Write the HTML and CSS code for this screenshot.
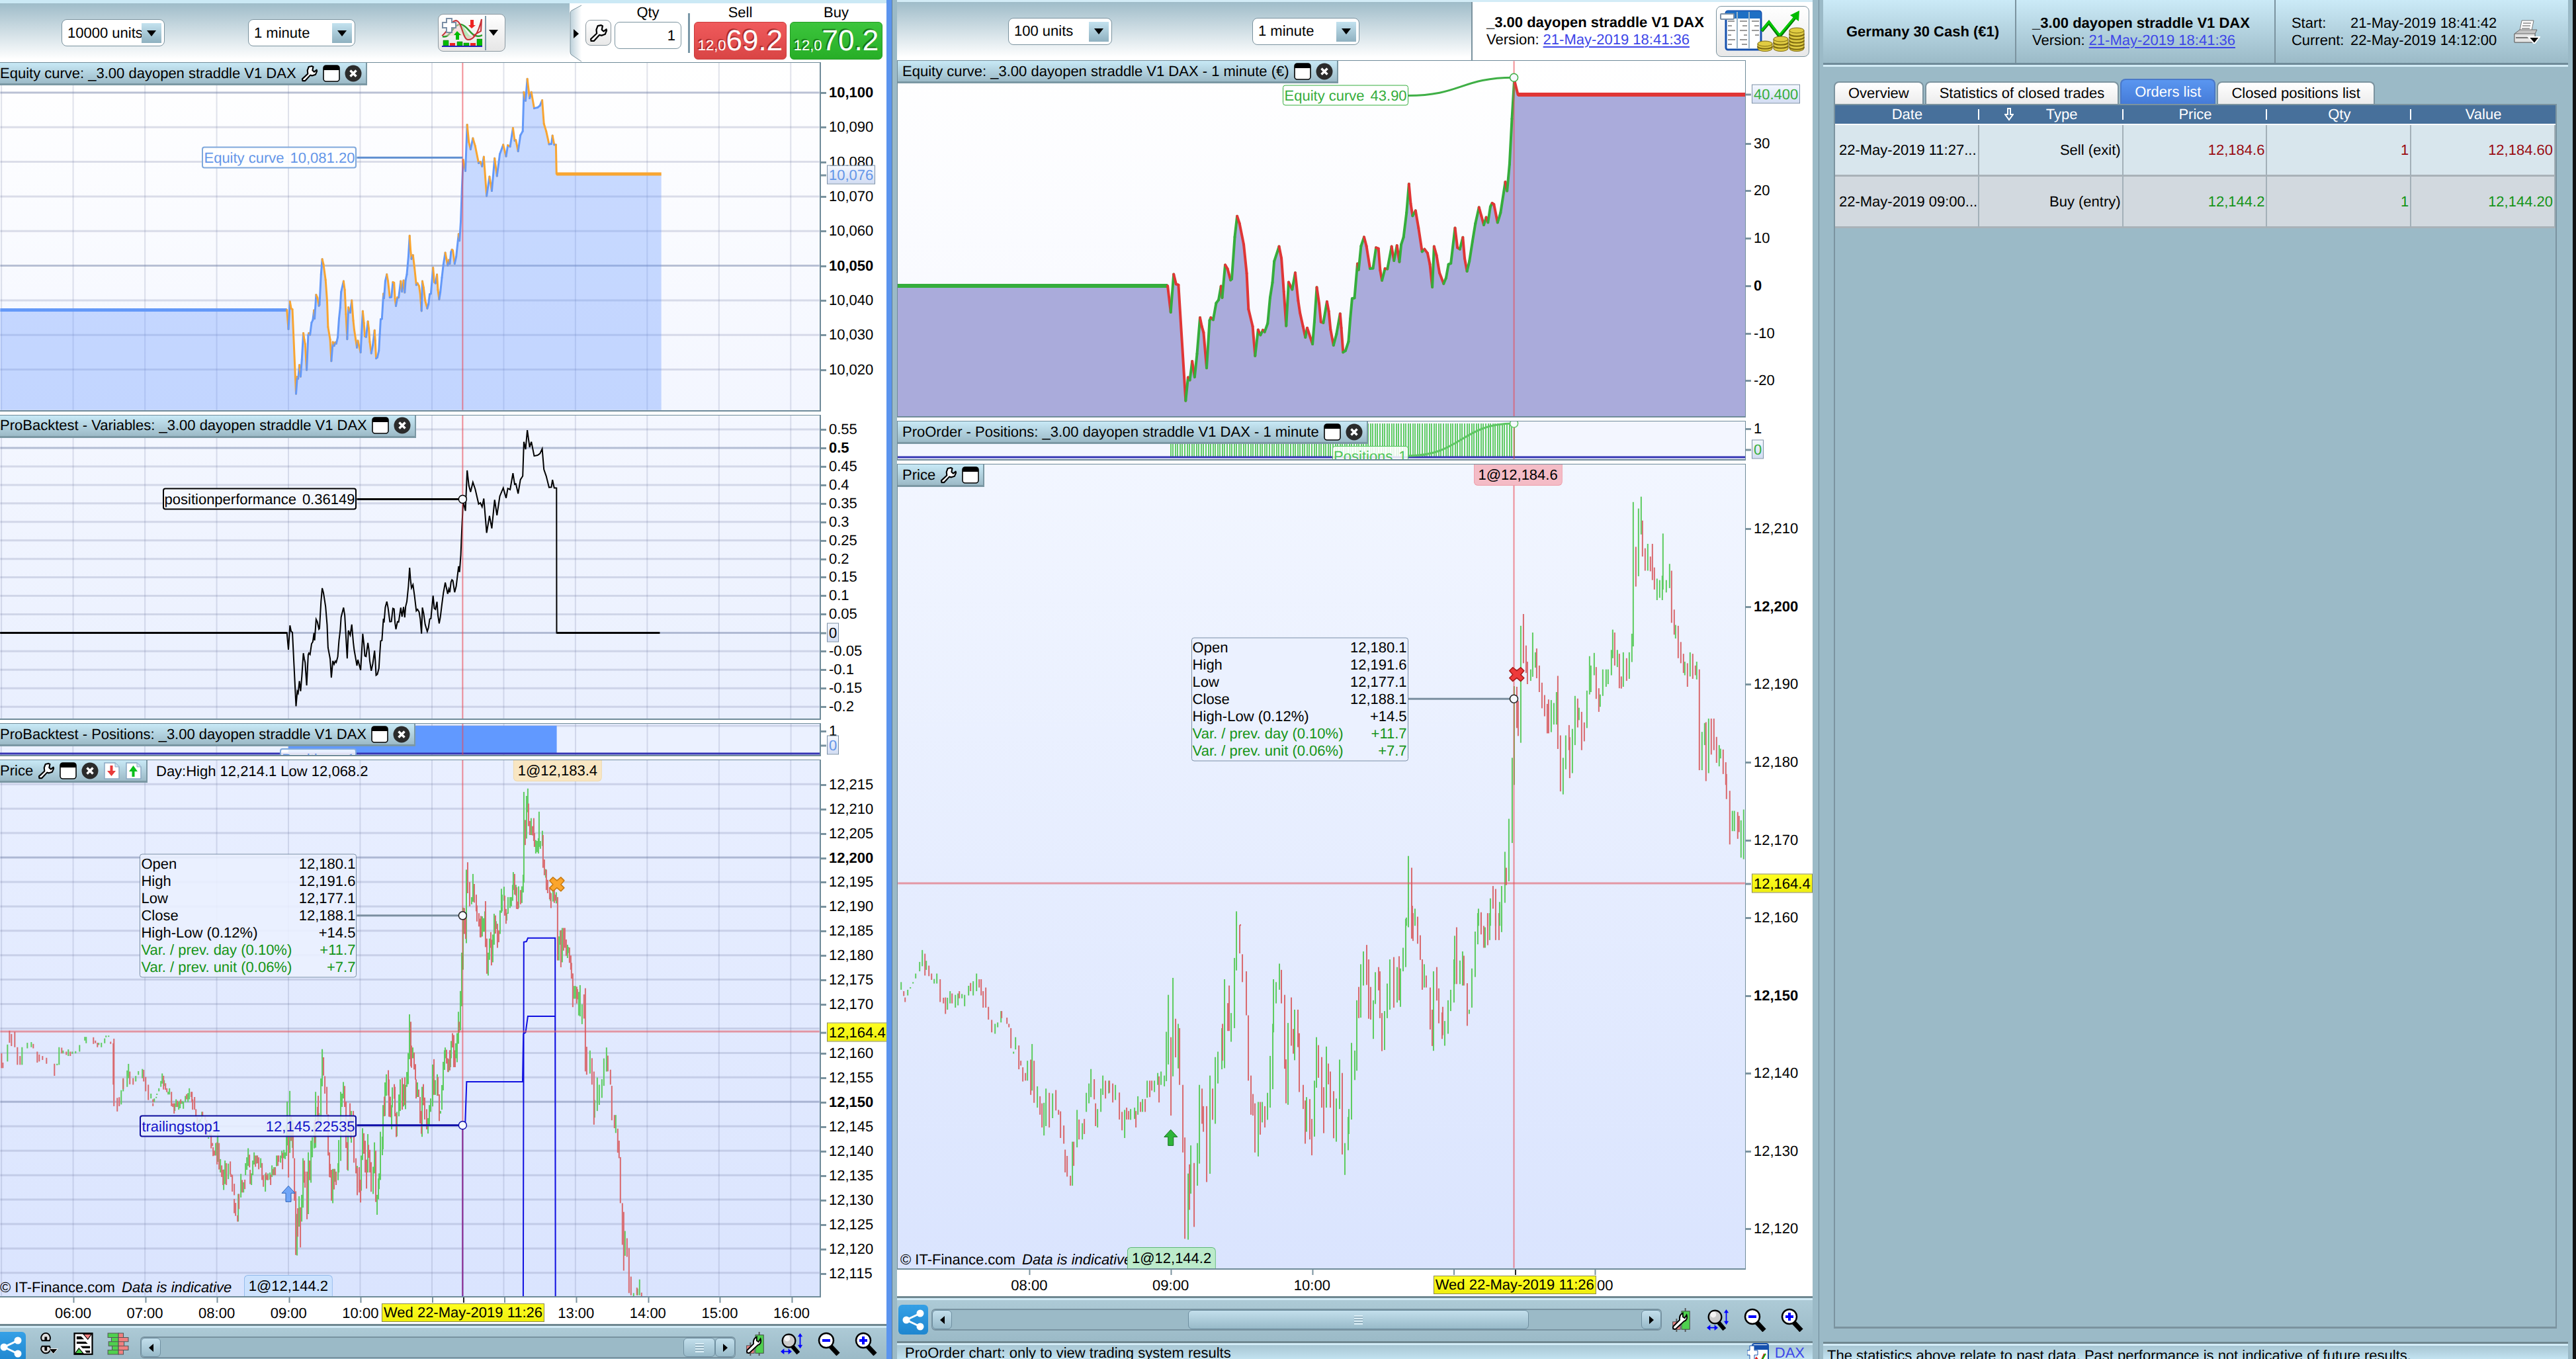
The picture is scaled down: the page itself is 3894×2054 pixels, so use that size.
FILE: index.html
```html
<!DOCTYPE html>
<html lang="en">
<head>
<meta charset="utf-8">
<title>_3.00 dayopen straddle V1 DAX</title>
<link rel="stylesheet" href="styles.css">
</head>
<body>
<svg class="sprite" aria-hidden="true">
  <symbol id="wrench" viewBox="-1 -1 27 27"><path d="M11.2 2.1 15.8 1l2.4 1.1L17 7.6l2.7 2.4 3.9-3 .4 2-2.2 5.2-5.1 1.8-3.1-.8L5.500 24l-4 0L1 21.200 9.700 13l-.6-5.400z" fill="#fff" stroke="#000" stroke-width="2.200" stroke-linejoin="round"/></symbol>
  <symbol id="win" viewBox="0 0 26 26"><rect x="1" y="1" width="24" height="24" rx="4" fill="#fff" stroke="#000" stroke-width="1.600"/><path d="M1 8V5q0-4 4-4h16q4 0 4 4v3z"/></symbol>
  <symbol id="close" viewBox="0 0 26 26"><circle cx="13" cy="13" r="12.500" fill="#2b2b2b"/><path d="M8.500 8.500l9 9m0-9l-9 9" stroke="#fff" stroke-width="3.500"/></symbol>
  <symbol id="docdown" viewBox="0 0 26 26"><path d="M2 1h16l6 6v18H2z" fill="#fff" stroke="#8aa9c4" stroke-width="1.500"/><path d="M18 1v6h6" fill="#cfe2f2" stroke="#8aa9c4"/><path d="M10.500 5h4v8h4.500l-6.500 8L6 13h4.500z" fill="#e83a3a"/></symbol>
  <symbol id="docup" viewBox="0 0 26 26"><path d="M2 1h16l6 6v18H2z" fill="#fff" stroke="#8aa9c4" stroke-width="1.500"/><path d="M18 1v6h6" fill="#cfe2f2" stroke="#8aa9c4"/><path d="M10.500 22h4v-8H19l-6.500-9L6 14h4.500z" fill="#0bbf1b"/></symbol>
  <symbol id="tri" viewBox="0 0 14 9"><path d="M0 0h14L7 9z"/></symbol>
  <symbol id="triright" viewBox="0 0 8 14"><path d="M0 0v14l8-7z"/></symbol>
  <symbol id="trileft" viewBox="0 0 8 14"><path d="M8 0v14L0 7z"/></symbol>
  <symbol id="share" viewBox="0 0 45 45"><path d="M33 13 12 23l21 10" fill="none" stroke="#fff" stroke-width="3"/><circle cx="33" cy="13" r="5.500" fill="#fff"/><circle cx="12" cy="23" r="5.500" fill="#fff"/><circle cx="33" cy="33" r="5.500" fill="#fff"/></symbol>
  <symbol id="candles" viewBox="0 0 32 38"><path d="M9 17v21M23 0v38" stroke="#555" stroke-width="2"/><rect x="3" y="22" width="12" height="12" fill="#f08585" stroke="#444"/><rect x="17" y="5" width="13" height="29" fill="#4fd04f" stroke="#444"/><path d="M19 8v6l3 2 3-5c2 6-1 9-4 10L8 33c-3 2-6-1-4-4l10-10c-1-6 1-9 5-11z" fill="#fff" stroke="#000" stroke-width="2"/></symbol>
  <symbol id="zoomfit" viewBox="0 0 38 36"><path d="M18 20l12 14" stroke="#000" stroke-width="7"/><circle cx="14" cy="13" r="11" fill="#ccc" stroke="#000" stroke-width="2.500"/><circle cx="11" cy="9" r="5" fill="#f4f4f4"/><path d="M33 4v18M3 31h12" stroke="#00f" stroke-width="2"/><path d="M33 0l-4 6h8zM33 26l-4-6h8zM0 31l6-5v10zM19 31l-6-5v10z" fill="#00f"/></symbol>
  <symbol id="zoomout" viewBox="0 0 34 36"><path d="M18 20l13 14" stroke="#000" stroke-width="7"/><circle cx="13" cy="13" r="11" fill="#fff" stroke="#000" stroke-width="2.500"/><path d="M7 13h12" stroke="#00f" stroke-width="4"/></symbol>
  <symbol id="zoomin" viewBox="0 0 34 36"><path d="M18 20l13 14" stroke="#000" stroke-width="7"/><circle cx="13" cy="13" r="11" fill="#fff" stroke="#000" stroke-width="2.500"/><path d="M7 13h12M13 7v12" stroke="#00f" stroke-width="4"/></symbol>
</svg>
<main class="desk">
  <section class="window backtest">
    <header class="toolbar">
      <label class="picker units"><select aria-label="Units"><option>10000 units</option></select><span class="drop"><svg><use href="#tri"/></svg></span></label>
      <label class="picker minutes"><select aria-label="Timeframe"><option>1 minute</option></select><span class="drop"><svg><use href="#tri"/></svg></span></label>
      <button class="indicator" aria-label="Add indicator">
        <svg class="art" viewBox="0 0 62 46"><path d="M2 28C14 32 18 8 30 10S46 34 62 26" fill="none" stroke="#2d9b2d" stroke-width="2.500"/><path d="M26 11C34 6 40 30 46 27 38 42 32 22 26 11z" fill="#b6e6b6"/><path d="M1 27C10 22 14 4 22 4 32 5 32 32 40 33S56 24 61 2L60 20 48 27" fill="#f6c9c9" fill-opacity=".5" stroke="#c62f35" stroke-width="2"/><path d="M8 1h8v6h6v8h-6v7H8v-7H2V7h6z" fill="#fff" stroke="#7b8fa6" stroke-width="2"/><path d="M24 20l-5 6h3v7h5v-7h3z" fill="#0b0"/><path d="M46 16l-5-5h3V3h5v8h3z" fill="#e22"/><path d="M3 34h8v8H3zM24 36h8v6h-8zM34 38h8v4h-8zM54 32h8v10h-8z" fill="#0b0" stroke="#060" stroke-width=".5"/><path d="M13 38h8v4h-8zM44 38h8v4h-8z" fill="#e22"/><path d="M1 43h61" stroke="#22b" stroke-width="2"/></svg>
        <span class="rule"></span><svg class="tri"><use href="#tri"/></svg>
      </button>
      <div class="trade">
        <svg class="notch" viewBox="0 0 18 88" preserveAspectRatio="none"><defs><linearGradient id="ng"><stop offset="0" stop-color="#bcd0da"/><stop offset="1" stop-color="#fff"/></linearGradient></defs><path d="M18 2 3 10Q1 11 1 14V72Q1 76 3 77L18 87z" fill="url(#ng)"/><path d="M18 2 3 10Q1 11 1 14V72Q1 76 3 77L18 87" fill="none" stroke="#7b939f"/><path d="M6 38l8 7-8 7z"/></svg>
        <button class="tool" aria-label="Order settings"><svg><use href="#wrench"/></svg></button>
        <label class="col qty"><span>Qty</span><input value="1"></label>
        <span class="vrule"></span>
        <div class="col"><span>Sell</span><button class="deal sell"><small>12,0</small><b>69.2</b></button></div>
        <div class="col"><span>Buy</span><button class="deal buy"><small>12,0</small><b>70.2</b></button></div>
      </div>
    </header>
    <div class="charts">
      <div class="panel p-equity" data-chart="leftEquity"><div class="plot">
        <div class="title"><span>Equity curve: _3.00 dayopen straddle V1 DAX</span><svg><use href="#wrench"/></svg><svg><use href="#win"/></svg><svg><use href="#close"/></svg></div>
        <div class="callout blue" data-y="10081.2"><span>Equity curve</span><span>10,081.20</span></div></div><div class="axis"></div></div>
      <div class="panel p-vars" data-chart="leftVars"><div class="plot">
        <div class="title"><span>ProBacktest - Variables: _3.00 dayopen straddle V1 DAX</span><svg><use href="#win"/></svg><svg><use href="#close"/></svg></div>
        <div class="callout black" data-y="0.3615"><span>positionperformance</span><span>0.36149</span></div></div><div class="axis"></div></div>
      <div class="panel p-pos" data-chart="leftPos"><div class="plot">
        <div class="callout blue low"><span>Positions</span><span>1</span></div>
        <div class="title"><span>ProBacktest - Positions: _3.00 dayopen straddle V1 DAX</span><svg><use href="#win"/></svg><svg><use href="#close"/></svg></div></div><div class="axis"></div></div>
      <div class="panel p-price" data-chart="leftPrice"><div class="plot">
        <div class="title"><span>Price</span><svg><use href="#wrench"/></svg><svg><use href="#win"/></svg><svg><use href="#close"/></svg><svg><use href="#docdown"/></svg><svg><use href="#docup"/></svg></div>
        <div class="range">Day:High 12,214.1 Low 12,068.2</div>
        <div class="order top amber" data-x="225">1@12,183.4</div>
        <div class="order bottom azure" data-x="0">1@12,144.2</div>
        <table class="callout ohlc" data-y="12188.1"><tr><th>Open</th><td>12,180.1</td></tr><tr><th>High</th><td>12,191.6</td></tr><tr><th>Low</th><td>12,177.1</td></tr><tr><th>Close</th><td>12,188.1</td></tr><tr><th>High-Low (0.12%)</th><td>+14.5</td></tr><tr class="up"><th>Var. / prev. day (0.10%)</th><td>+11.7</td></tr><tr class="up"><th>Var. / prev. unit (0.06%)</th><td>+7.7</td></tr></table>
        <div class="callout navy wide" data-y="12145.2"><span>trailingstop1</span><span>12,145.22535</span></div>
        <p class="credit">© IT-Finance.com <i>Data is indicative</i></p></div><div class="axis"></div></div>
      <div class="time" data-chart="leftPrice"><div class="hours"></div></div>
    </div>
    <footer class="tools">
      <button class="share" aria-label="Share"><svg><use href="#share"/></svg></button>
      <button class="icon side" aria-label="Link windows"><svg viewBox="0 0 30 38"><path d="M4 14C0 8 5 2 10 2s9 6 6 12h-5V9H9v5zM4 23c-4 5 1 11 6 11s9-5 6-11h-5v6H9v-6z" fill="#ddd" stroke="#000" stroke-width="2"/><path d="M15 27h14l-7 8z" stroke="#fff"/></svg></button>
      <button class="icon side" aria-label="Orders"><svg viewBox="0 0 26 32"><rect x="1" y="2" width="24" height="28" fill="#fff" stroke="#000" stroke-width="2"/><path d="M13 3h11l-5 7z" fill="#f08080" stroke="#000"/><path d="M2 29l5-7 6 7z" fill="#4c4" stroke="#000"/><path d="M4 6h6l4 4H4zM4 13h12l3 3H4zM9 19h13v3H12zM15 25h7v3h-5z"/></svg></button>
      <button class="icon side last" aria-label="Order book"><svg viewBox="0 0 32 32"><g stroke="#555"><path d="M2 1h15v6H2zM7 7h10v6H7zM3 13h14v6H3zM8 19h9v6H8zM2 25h15v6H2z" fill="#4fd04f"/><path d="M17 1h7v6h-7zM17 7h14v6H17zM17 13h8v6h-8zM17 19h14v6H17zM17 25h7v6h-7z" fill="#f08080"/></g></svg></button>
      <div class="scroll"><button aria-label="Back"><svg><use href="#trileft"/></svg></button><span class="track"></span><span class="thumb"><i></i></span><button aria-label="Forward"><svg><use href="#triright"/></svg></button></div>
      <button class="icon" aria-label="Chart settings"><svg><use href="#candles"/></svg></button><button class="icon" aria-label="Fit"><svg><use href="#zoomfit"/></svg></button><button class="icon" aria-label="Zoom out"><svg><use href="#zoomout"/></svg></button><button class="icon" aria-label="Zoom in"><svg><use href="#zoomin"/></svg></button>
    </footer>
  </section>

  <div class="divider"></div>

  <section class="window live">
    <header class="toolbar">
      <label class="picker hundred"><select aria-label="Units"><option>100 units</option></select><span class="drop"><svg><use href="#tri"/></svg></span></label>
      <label class="picker minutes"><select aria-label="Timeframe"><option>1 minute</option></select><span class="drop"><svg><use href="#tri"/></svg></span></label>
      <div class="system"><div><strong>_3.00 dayopen straddle V1 DAX</strong><br>Version: <a href="#v">21-May-2019 18:41:36</a></div>
        <button class="report" aria-label="Detailed report"><svg viewBox="0 0 130 66"><rect x="9" y="3" width="53" height="58" rx="3" fill="#fff" stroke="#1550ad" stroke-width="3"/><path d="M9 14V6q0-3 3-3h47q3 0 3 3v8z" fill="#1e6fc4"/><path d="M26 4v56M44 4v56" stroke="#9bb4c6" stroke-width="2"/><path d="M12 18h10M12 25h6M12 32h11M12 39h5M12 46h11M12 53h6M30 18h11M34 25h7M30 32h11M36 39h5M30 46h11M33 53h8M48 18h11M52 25h7M48 32h11M53 39h6" stroke="#999" stroke-width="2"/><rect x="1" y="7" width="20" height="8" rx="1" fill="#fff" stroke="#7b8fa6" stroke-width="2"/><path d="M63 33 74 20l16 21 24-29" fill="none" stroke="#070" stroke-width="5"/><path d="M63 32 74 19l16 20 23-27" fill="none" stroke="#0c0" stroke-width="3"/><path d="M106 9l14-7-1 16z" fill="#0b0"/><g fill="#e0cc42" stroke="#7d6a10"><path d="M57 52v7c0 6 22 6 22 0v-7zM81 45v14c0 6 22 6 22 0V45zM105 32v27c0 6 22 6 22 0V32z"/><path d="M57 56c0 5 22 5 22 0M81 50c0 5 22 5 22 0M81 55c0 5 22 5 22 0M105 37c0 5 22 5 22 0M105 42c0 5 22 5 22 0M105 47c0 5 22 5 22 0M105 52c0 5 22 5 22 0M105 57c0 5 22 5 22 0" fill="none" stroke-width="2"/><ellipse cx="68" cy="52" rx="11" ry="4"/><ellipse cx="92" cy="45" rx="11" ry="4"/><ellipse cx="116" cy="32" rx="11" ry="4"/></g></svg></button></div>
    </header>
    <div class="charts">
      <div class="panel p-equity" data-chart="midEquity"><div class="plot">
        <div class="title"><span>Equity curve: _3.00 dayopen straddle V1 DAX - 1 minute (€)</span><svg><use href="#win"/></svg><svg><use href="#close"/></svg></div>
        <div class="callout green" data-y="40.1"><span>Equity curve</span><span>43.90</span></div></div><div class="axis"></div></div>
      <div class="panel p-pos" data-chart="midPos"><div class="plot">
        <div class="title"><span>ProOrder - Positions: _3.00 dayopen straddle V1 DAX - 1 minute</span><svg><use href="#win"/></svg><svg><use href="#close"/></svg></div>
        <div class="callout lime low"><span>Positions</span><span>1</span></div></div><div class="axis"></div></div>
      <div class="panel p-price" data-chart="midPrice"><div class="plot">
        <div class="order top pink" data-x="147.7">1@12,184.6</div>
        <div class="title"><span>Price</span><svg><use href="#wrench"/></svg><svg><use href="#win"/></svg></div>
        <p class="credit">© IT-Finance.com <i>Data is indicative</i></p>
        <div class="order bottom mint" data-x="0.4">1@12,144.2</div>
        <table class="callout ohlc" data-y="12188.1"><tr><th>Open</th><td>12,180.1</td></tr><tr><th>High</th><td>12,191.6</td></tr><tr><th>Low</th><td>12,177.1</td></tr><tr><th>Close</th><td>12,188.1</td></tr><tr><th>High-Low (0.12%)</th><td>+14.5</td></tr><tr class="up"><th>Var. / prev. day (0.10%)</th><td>+11.7</td></tr><tr class="up"><th>Var. / prev. unit (0.06%)</th><td>+7.7</td></tr></table></div><div class="axis"></div></div>
      <div class="time" data-chart="midPrice"><div class="hours"></div></div>
    </div>
    <footer class="tools">
      <button class="share" aria-label="Share"><svg><use href="#share"/></svg></button>
      <div class="scroll"><button aria-label="Back"><svg><use href="#trileft"/></svg></button><span class="track before"></span><span class="thumb"><i></i></span><span class="track after"></span><button aria-label="Forward"><svg><use href="#triright"/></svg></button></div>
      <button class="icon" aria-label="Chart settings"><svg><use href="#candles"/></svg></button><button class="icon" aria-label="Fit"><svg><use href="#zoomfit"/></svg></button><button class="icon" aria-label="Zoom out"><svg><use href="#zoomout"/></svg></button><button class="icon" aria-label="Zoom in"><svg><use href="#zoomin"/></svg></button>
    </footer>
    <div class="status"><span>ProOrder chart: only to view trading system results</span><svg viewBox="0 0 34 30"><rect x="8" y="1" width="24" height="40" rx="3" fill="#fff" stroke="#1550ad" stroke-width="2"/><path d="M8 10V3h24v7z" fill="#1550ad"/><path d="M9 30l5-8 6 8 6-14" fill="none" stroke="#d22" stroke-width="2"/><path d="M20 30l8-14" stroke="#0a0" stroke-width="2"/><path d="M4 4h7v7h5v7h-5v7H4v-7H0v-7h4z" fill="#fff" stroke="#1550ad"/></svg><a href="#dax">DAX</a></div>
  </section>

  <section class="window orders">
    <header class="summary">
      <strong class="market">Germany 30 Cash (€1)</strong>
      <div class="version"><strong>_3.00 dayopen straddle V1 DAX</strong><br>Version: <a href="#v">21-May-2019 18:41:36</a></div>
      <dl class="dates"><dt>Start:</dt><dd>21-May-2019 18:41:42</dd><dt>Current:</dt><dd>22-May-2019 14:12:00</dd></dl>
      <button class="icon print" aria-label="Print"><svg viewBox="0 0 40 36"><path d="M12 1h18l-3 15H9z" fill="#fff" stroke="#777"/><path d="M14 5h12M13 9h12M12 13h12" stroke="#888" stroke-width="1.500"/><path d="M1 21l8-6h26l-3 6v13H1z" fill="#c4c4c4" stroke="#666"/><path d="M1 21h31v13H1z" fill="#e4e4e4" stroke="#666"/><path d="M3 27h28" stroke="#777" stroke-width="2"/><path d="M22 26h17l-8 10z" stroke="#fff" stroke-width="2"/></svg></button>
    </header>
    <div class="book">
      <nav class="tabs"><button>Overview</button><button>Statistics of closed trades</button><button class="on">Orders list</button><button>Closed positions list</button></nav>
      <div class="sheet">
        <table class="list">
          <thead><tr><th>Date</th><th><svg viewBox="0 0 14 20"><path d="M5 1h4v9h4l-6 8-6-8h4z" fill="none" stroke="#fff" stroke-width="2"/></svg>Type</th><th>Price</th><th>Qty</th><th>Value</th></tr></thead>
          <tbody><tr class="exit"><td>22-May-2019 11:27...</td><td>Sell (exit)</td><td>12,184.6</td><td>1</td><td>12,184.60</td></tr>
          <tr class="entry"><td>22-May-2019 09:00...</td><td>Buy (entry)</td><td>12,144.2</td><td>1</td><td>12,144.20</td></tr></tbody>
        </table>
      </div>
    </div>
    <div class="status"><span>The statistics above relate to past data. Past performance is not indicative of future results.</span></div>
  </section>
</main>
<script src="charts.js"></script>
</body>
</html>
```

FILE: styles.css
```css
* { box-sizing: border-box; }
body { margin: 0; font: 22px/26px "Liberation Sans", Arial, sans-serif; color: #000; background: #9bbac7; text-rendering: geometricPrecision; }
button, select, input { font: inherit; color: inherit; margin: 0; padding: 0; border: 0; background: none; text-rendering: inherit; }
a { color: #3d46e8; text-decoration-thickness: 2px; text-underline-offset: 3px; }
.sprite { position: absolute; width: 0; height: 0; }

.desk { display: grid; grid-template-columns: 1340fr 9px 1400fr 1145fr; height: 100vh; min-height: 900px; overflow: hidden; }
.window { display: flex; flex-direction: column; min-width: 0; min-height: 0; overflow: hidden; }
.divider { background: #5b94ee; border-right: 1px solid #5d7f99; }
.live { border-left: 7px solid #9bbac7; border-right: 9px solid #9bbac7; }
.backtest, .live { background: #fff; }
.orders { border-left: 1px solid #6f8b99; padding-left: 6px; padding-right: 7px; border-right: 5px solid #111; }

.toolbar { display: flex; align-items: center; flex: none; background: linear-gradient(#9fbcc9, #fff 95%); }
.backtest .toolbar { height: 94px; padding-left: 93px; border-top: 5px solid #7593a2; border-image: linear-gradient(#cbe9f5 50%, #7593a2 50%) 5 0 0; }
.live .toolbar { height: 91px; padding-left: 168px; border-top: 3px solid #d3ecf7; }
.picker { position: relative; display: flex; height: 41px; border: 1px solid #7b939f; border-radius: 8px; background: #fff; }
.picker select { appearance: none; width: 100%; padding-left: 8px; }
.units { width: 156px; }
.minutes { width: 162px; margin-left: 126px; }
.hundred { width: 157px; }
.live .minutes { margin-left: 212px; }
.drop { position: absolute; right: 4px; top: 5px; width: 30px; height: 30px; display: grid; place-items: center; background: linear-gradient(#c3e2ef, #8fb1c0); pointer-events: none; }
.drop svg, .tri { width: 14px; height: 9px; }
.indicator { display: flex; align-items: center; gap: 4px; width: 102px; height: 57px; margin-left: 125px; padding-left: 4px; border: 1px solid #8b98a0; border-radius: 8px; background: linear-gradient(#fff, #e6e6e6); }
.indicator .art { flex: none; width: 62px; height: 46px; }
.rule { width: 2px; height: 52px; background: #7b98a8; }
.indicator .tri { flex: none; }
.trade { display: flex; align-items: center; align-self: stretch; margin-left: auto; padding-right: 6px; background: #fff; }
.notch { width: 18px; height: 88px; margin-right: 6px; }
.tool { width: 39px; height: 39px; border: 1px solid #8b98a0; border-radius: 8px; background: linear-gradient(#fff, #e8e8e8); display: grid; place-items: center; }
.tool svg { width: 28px; height: 28px; }
.col { display: flex; flex-direction: column; align-items: center; align-self: stretch; line-height: 28px; }
.qty { margin-left: 5px; }
.qty input { width: 101px; height: 41px; padding-right: 8px; text-align: right; border: 1px solid #7b939f; border-radius: 8px; }
.vrule { width: 3px; height: 60px; background: #7b98a8; margin: 0 6px 0 10px; }
.deal { width: 140px; height: 57px; border-radius: 6px; color: #fff; white-space: nowrap; }
.deal small { font-size: 22px; }
.deal b { font-size: 44px; font-weight: 400; line-height: 50px; }
.sell { background: linear-gradient(#f05a5c, #d94545); border: 1px solid #c93c3c; text-shadow: -2px -2px 0 #a92c2c; }
.buy { background: linear-gradient(#3cc53c, #27ae27); border: 1px solid #239a23; text-shadow: -2px -2px 0 #157a15; }
.col + .col { margin-left: 5px; }
.system { display: flex; align-items: center; align-self: stretch; justify-content: space-between; width: 516px; margin-left: auto; padding: 0 5px 0 21px; white-space: nowrap; border-left: 2px solid #7b939f; background: #fff; }
.report { width: 141px; height: 77px; border: 1px solid #7b939f; border-radius: 8px; background: linear-gradient(#fff, #e8e8e8); }
.report svg { width: 130px; height: 66px; display: block; margin: auto; }

.charts { flex: 1; display: flex; flex-direction: column; min-height: 0; }
.panel { display: flex; margin-bottom: 5px; min-height: 0; }
.plot { position: relative; flex: 1; min-width: 0; overflow: hidden; border: 1px solid #6f8b99; border-bottom-width: 2px; }
.backtest .plot { border-left: 0; border-right-width: 2px; }
.axis { position: relative; flex: none; width: 99px; }
.live .axis { width: 101px; }
.backtest .p-equity { flex: 528; }
.backtest .p-vars { flex: 462; }
.p-pos { flex: none; height: 50px; }
.backtest .p-price { flex: 813; margin-bottom: 0; }
.live .p-equity { flex: 541; }
.live .p-pos { height: 60px; }
.live .p-price { flex: 1219; margin-bottom: 0; }
.p-equity .plot { background: linear-gradient(#fff, #f5f7ff); }
.backtest .p-equity .plot { background: linear-gradient(#fff, #f3f6ff); }
.p-vars .plot { background: linear-gradient(#f4f7ff, #e9effe); }
.p-pos .plot { background: #ebf1ff; }
.live .p-pos .plot { background: #f3f6ff; }
.p-price .plot { background: linear-gradient(#e9efff, #dae4fe); }
.live .p-price .plot { background: linear-gradient(#f2f6ff, #dae4fe); }
.canvas { position: absolute; inset: 0; width: 100%; height: 100%; }

.title { position: absolute; left: 0; top: 0; display: flex; align-items: center; gap: 7px; height: 34px; padding-right: 6px; white-space: nowrap; background: linear-gradient(#c8e9f6, #9cbac7); border: solid #7b98a4; border-width: 0 2px 3px 0; }
.live .title { padding-left: 7px; }
.title svg { width: 26px; height: 26px; }
.range { position: absolute; left: 236px; top: 4px; }
.order { position: absolute; padding: 2px 6px; height: 32px; line-height: 28px; transform: translateX(-50%); border: 1px solid; }
.order.top { top: 0; border-radius: 0 0 6px 6px; border-top: 0; }
.order.bottom { bottom: 0; border-radius: 6px 6px 0 0; border-bottom: 0; }
.amber { background: #f8e6c3; border-color: #f0d8a8; }
.azure { background: #cce2fe; border-color: #8fb8ea; }
.pink { background: #f4bcc6; border-color: #ee9ca8; }
.mint { background: #bcebcb; border-color: #5fb877; }
.credit { position: absolute; left: 0; bottom: 0; margin: 0; white-space: pre; }
.credit i { margin-left: 4px; }
.live .credit { left: 4px; }
.callout { position: absolute; right: calc(100% - var(--cross) + 160px); display: flex; justify-content: space-between; gap: 9px; padding: 2px 1px; line-height: 25px; white-space: nowrap; border: 2px solid; border-radius: 4px; background: rgba(255, 255, 255, .85); transform: translateY(-50%); }
.callout.blue { color: #6496e8; border-color: #7fa8dc; }
.callout.black { background: #f5f8ff; }
.callout.green { color: #35ad3c; border-color: #35ad3c; border-width: 1px; }
.callout.lime { color: #4fc557; border-color: #4fc557; border-width: 1px; }
.callout.navy { color: #1212c8; border-color: #0d0d9c; background: rgba(232, 238, 255, .85); }
.callout.low { transform: none; top: 37px; }
.callout.wide { width: 328px; }
.callout.ohlc { display: table; width: 328px; padding: 1px 1px 2px; border: 1px solid #7b8fa6; border-spacing: 0; background: rgba(234, 240, 255, .88); }
.ohlc th { text-align: left; font-weight: 400; padding: 0; line-height: 26px; }
.ohlc td { text-align: right; padding: 0; line-height: 26px; }
.up { color: #159417; }

.axis span { position: absolute; left: 12px; line-height: 28px; transform: translateY(-50%); }
.axis span::before { content: ""; position: absolute; left: -12px; top: 13px; width: 8px; height: 3px; background: #7b939f; }
.axis .tag { left: 9px; padding: 0 2px; line-height: 27px; border: 1px solid #7b8fa6; background: linear-gradient(#f4f8ff, #d2dcf2); }
.axis .tag::before { left: -10px; }
.axis .yellow { background: linear-gradient(#ffff20, #eeee10); border-color: #8a8a4a; }
.axis .cb { color: #6496e8; }
.axis .cg { color: #35ad3c; }
.axis .bold { font-weight: 700; }
.time { flex: none; height: 40px; position: relative; }
.hours { position: absolute; inset: 0 100px 0 0; }
.hours span { position: absolute; top: 11px; transform: translateX(-50%); }
.hours span::before { content: ""; position: absolute; left: 50%; top: -11px; width: 2px; height: 8px; background: #7b939f; }
.hours .now { top: 9px; padding: 0 2px; white-space: nowrap; background: linear-gradient(#ffff20, #eeee10); border: 1px solid #8a8a4a; }
.hours .now::before { top: -10px; background: #222; }

.tools { display: flex; align-items: center; flex: none; background: linear-gradient(#aecbd7, #9bbac7); border-top: 3px solid #6f8790; box-shadow: inset 0 3px #d3ecf7; }
.backtest .tools { height: 53px; align-items: flex-start; padding-top: 9px; overflow: hidden; }
.live .tools { height: 68px; padding-left: 2px; }
.share { width: 45px; height: 45px; border-radius: 6px; background: linear-gradient(#35a0e6, #1e86cf); }
.share svg { width: 45px; height: 45px; display: block; }
.backtest .share { margin-left: -6px; }
.icon svg { display: block; width: 34px; height: 36px; }
.icon { margin-left: 22px; }
.icon.side { margin-left: 18px; }
.icon.last { margin-right: 17px; }
.scroll { display: flex; flex: 1; height: 33px; margin: 0 -10px 0 5px; border-radius: 6px; background: #9bbac7; border: 1px solid #7892a0; border-width: 2px 1px; }
.backtest .scroll { margin: 7px -10px 0 0; }
.scroll button, .thumb { width: 30px; display: grid; place-items: center; border: 1px solid #6f8fa0; border-radius: 6px; background: linear-gradient(#c3dfec, #98bac9); }
.scroll button svg { width: 7px; height: 14px; }
.track { flex: 1; }
.before { flex: 359; }
.after { flex: 171; }
.thumb { width: 48px; }
.live .thumb { width: auto; flex: 516; }
.thumb i { width: 13px; height: 14px; background: repeating-linear-gradient(#dbeef6 0 2px, #7b98a8 2px 3px, transparent 3px 4px); }
.tools > .icon:last-child { margin-right: 14px; }
.status { display: flex; align-items: center; gap: 8px; flex: none; height: 27px; padding: 6px 12px 0; overflow: hidden; white-space: nowrap; background: linear-gradient(#a4c2cf, #c2e2f0); border-top: 3px solid #6f8790; box-shadow: inset 0 3px #d3ecf7; }
.status svg { width: 34px; height: 30px; margin-left: auto; }
.orders .status { height: 26px; padding: 12px 6px 0; }

.summary { display: flex; align-items: center; flex: none; height: 95px; background: linear-gradient(#cbeaf7, #9bbac7); }
.market { width: 290px; padding-left: 35px; }
.version, .dates { align-self: stretch; border-left: 2px solid #7b939f; padding: 22px 0 0 24px; white-space: nowrap; }
.version { flex: 393; }
.dates { display: grid; grid-template-columns: 89px auto; grid-auto-rows: 26px; justify-content: start; flex: 361; margin: 0; }
.dates dd { margin: 0; }
.print { margin: 0 42px 0 0; }
.print svg { width: 40px; height: 36px; }
.book { display: flex; flex-direction: column; flex: 1; padding: 21px 17px 20px 16px; border-top: 3px solid #6f8b99; box-shadow: inset 0 3px #d3ecf7; }
.tabs { display: flex; align-items: flex-end; gap: 2px; }
.tabs button { height: 34px; padding: 0 20px; border: 2px solid #7b939f; border-bottom: 0; border-radius: 8px 8px 0 0; background: linear-gradient(#fff, #ececec); }
.tabs .on { height: 38px; color: #fff; background: linear-gradient(#5a96f0, #457bd8); border-color: #4a78c8; }
.sheet { flex: 1; border: 2px solid #7b939f; border-bottom-width: 3px; }
.list { width: 100%; table-layout: fixed; border-collapse: separate; border-spacing: 0; }
.list th { position: relative; height: 30px; padding: 0; color: #fff; font-weight: 400; background: #47709b; border-bottom: 2px solid #fff; }
.list th + th::before { content: ""; position: absolute; left: -2px; top: 6px; width: 2px; height: 16px; background: #fff; }
.list th svg { position: absolute; left: 38px; top: 4px; width: 14px; height: 20px; }
.list th:nth-child(2) { padding-left: 32px; }
.list td { height: 78px; padding: 0 2px; text-align: right; border-right: 2px solid #a3b0b8; border-bottom: 3px solid #a9b2b8; white-space: nowrap; }
.list td:first-child { text-align: left; padding-left: 6px; }
.exit td { background: #d8e6ed; }
.entry td { background: #d2d9df; }
.exit td:nth-child(n+3) { color: #9a0c12; }
.entry td:nth-child(n+3) { color: #159417; }
```

FILE: charts.js
```js
const feeds = [
  { t0: 475, kt: .2546, p0: 12150, y0: 289, ky: .03652,
    up: [24,243,270,35,270,290,40,261,264,44,243,248,49,213,230,55,172,205,60,130,187,66,168,200,80,232,248,84,213,248,102,298,340,106,275,318,115,288,333,120,283,325,126,285,300,130,288,328,137,256,290,145,240,290,150,213,275,181,390,425,186,385,402,191,345,385,212,488,495,216,437,480,236,520,590,243,461,625,252,610,685,263,668,783,267,618,750,278,635,722,311,805,960,318,693,825,327,740,797,334,633,700,338,600,670,342,549,648,353,690,755,358,618,700,362,572,640,371,590,635,383,605,658,398,693,792,408,690,728,414,685,725,420,645,710,428,655,700,436,590,650,448,590,630,453,563,605,459,558,605,464,572,610,468,418,592,471,288,533,479,228,575,488,390,547,504,917,1150,509,818,988,519,810,960,523,605,882,540,572,918,549,507,742,554,488,600,560,405,550,565,233,546,576,352,453,581,158,405,585,0,202,621,665,857,628,665,737,637,633,728,641,503,685,646,390,620,647,233,420,651,243,318,656,178,270,671,387,675,682,340,518,702,648,770,715,590,787,718,437,615,735,470,685,752,653,805,757,516,690,766,810,922,771,718,835,773,690,778,777,457,727,783,484,588,786,307,555,793,180,368,797,135,255,813,307,443,817,208,320,832,345,482,837,248,370,841,163,340,853,190,315,859,195,330,863,122,205,868,20,190,872,-20,50,898,180,262,914,205,485,933,380,467,938,307,425,943,270,345,948,163,315,949,80,250,958,167,250,963,135,255,974,340,355,978,195,333,984,65,225,988,0,110,1000,50,122,1008,0,95,1028,-30,67],
    down: [29,275,292,31,297,313,64,143,220,71,185,222,75,213,235,90,233,313,95,298,318,99,297,355,110,283,318,122,275,300,141,246,275,155,233,262,158,233,290,161,275,333,166,262,333,170,330,375,176,376,420,192,345,370,201,368,390,205,390,402,208,405,476,221,466,550,225,520,537,228,543,593,232,563,590,241,516,640,247,520,668,256,645,710,260,670,755,272,633,755,283,623,695,287,693,710,291,698,792,296,748,812,298,833,913,302,855,928,307,925,960,313,805,890,322,727,797,331,725,778,347,585,656,349,670,750,366,590,653,373,590,633,378,600,667,389,632,727,393,700,765,401,685,727,405,697,727,417,697,755,425,665,700,432,655,700,440,590,648,443,590,625,455,575,667,475,437,713,483,372,508,490,405,605,495,605,843,499,790,1147,506,885,1045,514,880,1105,527,618,742,530,680,770,535,680,947,545,618,728,562,390,520,570,317,415,573,255,415,590,42,142,595,145,243,601,205,360,605,360,590,609,572,710,612,637,713,616,670,843,625,665,780,632,680,755,660,200,318,665,288,548,668,515,670,676,297,467,680,408,495,687,340,472,690,423,630,696,605,690,700,660,812,707,655,797,711,725,853,722,465,580,727,507,685,731,613,775,738,530,603,742,558,685,747,627,793,762,563,850,789,260,370,802,112,253,806,163,372,809,260,375,822,190,272,825,205,370,828,352,486,848,155,333,857,152,307,877,0,90,880,0,98,888,15,108,892,78,165,895,163,270,902,220,262,908,262,410,912,340,468,919,190,308,923,265,388,928,350,443,930,330,430,953,50,250,965,150,255,970,247,397,994,0,75,998,45,122,1005,0,113,1018,0,95,1023,0,95] },
  { t0: 475, kt: .2546, p0: 12190, y0: 748, ky: .0379,
    up: [585,1519,1568,869,1540,1568,872,1331,1568,883,1510,1568,989,1510,1568,1009,1475,1568,1024,1487,1568,1028,1433,1568,1033,1317,1490,1040,1205,1417,1045,998,1287,1049,755,1090,1060,550,947,1076,698,737,1080,573,723,1084,640,692,1111,802,911,1115,812,885,1120,775,885,1131,998,1122,1135,922,1037,1146,900,1050,1150,788,955,1157,828,870,1170,770,897,1175,653,783,1177,685,775,1182,642,718,1192,783,825,1197,698,788,1202,698,757,1206,698,748,1211,632,718,1213,563,660,1221,632,690,1231,640,757,1241,640,730,1246,577,673,1248,130,620,1257,152,382,1261,112,240,1272,272,363,1287,390,463,1292,395,455,1296,380,463,1298,237,427,1303,395,437,1308,340,422,1319,547,593,1334,672,718,1343,640,722,1354,672,732,1363,910,1040,1367,880,955,1374,865,1050,1391,955,1027,1394,967,1000,1413,1178,1247,1417,1178,1247,1428,1210,1337],
    down: [591,1563,1568,877,1371,1540,879,1500,1568,888,1537,1568,994,1522,1568,1005,1527,1568,1014,1433,1510,1018,1443,1568,1036,1371,1430,1053,757,897,1056,805,924,1064,510,677,1069,617,710,1071,672,748,1086,627,728,1091,685,775,1095,743,830,1100,785,857,1104,815,915,1106,800,915,1122,720,968,1126,922,1112,1140,887,972,1142,928,1067,1155,797,895,1162,842,972,1166,878,942,1186,690,798,1190,762,842,1217,573,685,1225,645,762,1228,722,763,1237,660,737,1252,282,417,1263,193,315,1268,287,363,1277,315,365,1280,272,395,1283,352,427,1312,363,540,1316,495,580,1323,550,660,1327,605,677,1332,645,710,1338,677,757,1347,645,730,1352,685,718,1358,698,1040,1369,877,1077,1378,865,987,1383,865,972,1387,927,1015,1398,970,1053,1402,1013,1090,1404,1053,1138,1409,1110,1292,1422,1182,1273,1425,1195,1250] },
  { t0: 503, kt: .479, p0: 12200, y0: 468, ky: .04504,
    up: [12,1318,1395,38,1330,1410,47,1310,1335,54,1307,1330,99,1405,1412,103,1330,1410,110,1345,1358,119,1340,1370,126,1350,1360,131,1348,1358,138,1320,1350,147,1283,1300,150,1283,1312,172,1310,1320,176,1310,1330,182,1290,1312,185,1277,1285,189,1277,1281,1012,1048,1190,1016,1135,1225,1029,1345,1450],
    down: [2,1358,1425,5,1400,1425,16,1255,1310,20,1270,1325,25,1260,1330,30,1330,1410,34,1370,1410,57,1315,1335,64,1350,1400,68,1363,1395,74,1370,1388,81,1378,1405,94,1405,1460,107,1332,1358,115,1350,1365,122,1350,1370,162,1285,1315,166,1300,1312,169,1310,1330,192,1305,1315,197,1312,1500,1019,1090,1200,1021,1062,1440,1024,1328,1455,1033,1380,1500,1061,1368,1440,1065,1432,1500] },
  { t0: 503, kt: .479, p0: 12150, y0: 198, ky: .04487,
    up: [211,145,210,214,95,150,221,55,130,224,25,90,237,80,105,241,58,75,248,48,90,1038,190,270,1042,87,240,1046,120,212,1050,95,180,1054,0,125,1058,-50,60,1074,258,340,1091,787,900,1105,1070,1085,1113,1050,1080,1116,1008,1080],
    down: [198,-90,218,204,180,242,208,177,218,215,90,140,226,60,118,232,90,120,250,52,105,254,85,150,258,120,190,1036,60,302,1068,125,282,1072,258,318,1078,320,430,1080,375,455,1083,450,660,1086,660,850,1088,700,968,1094,820,905,1097,865,1070,1101,995,1080,1111,1045,1080,1119,1068,1085] }
];
const bars = [];
feeds.forEach(f => ['up', 'down'].forEach(d => {
  for (let i = 0; i < f[d].length; i += 3) bars.push({ d, t: (f[d][i] - f.t0) * f.kt, hi: f.p0 - (f[d][i + 1] - f.y0) * f.ky, lo: f.p0 - (f[d][i + 2] - f.y0) * f.ky });
}));

const pairs = (a, t0, kt, y0, ky) => a.reduce((r, v, i) => (i % 2 || r.push([(v - t0) * kt, (y0 - a[i + 1]) / ky]), r), []);
const gain = pairs([470,941,475,1028,480,903,484,935,488,938,500,1320,504,1243,507,1252,511,1190,515,1242,519,1165,524,1046,527,1075,530,1095,535,1212,540,1055,542,1046,546,1053,551,998,555,987,559,942,561,980,566,872,570,885,575,922,577,918,582,780,586,711,590,735,597,805,602,900,605,1018,612,1075,616,1172,621,1086,625,1103,629,1087,632,1093,637,1065,641,980,645,930,648,860,656,811,660,850,664,960,668,1073,672,929,678,953,683,898,688,990,691,1030,696,1075,700,1111,703,1080,712,1133,715,1060,719,946,723,1000,726,1060,730,1063,736,993,739,1025,742,1085,747,1137,752,1100,758,1033,760,1080,763,1160,767,1155,772,1125,775,1050,778,983,782,981,787,868,789,888,793,810,798,780,802,810,808,884,813,883,818,815,822,818,825,890,828,923,833,884,837,885,844,811,848,858,853,808,857,862,860,805,864,780,869,700,873,605,876,670,879,710,884,693,889,750,895,828,899,820,904,833,908,870,912,945,915,811,919,840,924,898,931,934,935,915,939,870,943,867,950,750,954,815,958,820,963,781,966,850,970,893,974,860,979,795,984,735,990,682,994,710,998,740,1002,715,1005,732,1009,680,1012,668,1015,672,1021,732,1026,700,1034,598,1037,628,1041,540,1045,390,1049,262], 475, .2546, 941, 15.65);
const later = pairs([812,637,815,466,818,530,821,557,825,516,829,545,835,608,838,603,841,620,844,585,849,730,854,658,858,711,863,590,867,656,872,575,878,540,883,583,886,542,890,547,895,478,898,525,900,523,904,564,908,505,912,490,914,345,917,377,920,296,924,368,927,345,932,405,938,402,942,395,946,375,949,462,953,490,958,538,962,537,964,506,967,540,970,540], 503, .479, 1152, 12.82);

const steps = (from, to, by) => Array.from({ length: Math.round((to - from) / by) + 1 }, (_, i) => +(from + i * by).toFixed(2));
const commas = v => v.toLocaleString('en-US');
const L = { t: [-241, 444], hours: [6, 7, 8, 9, 10, 13, 14, 15, 16], ticksOnly: [11, 12], cross: 145.7, grid: true };
const M = { t: [-116.1, 244.3], hours: [8, 9, 10, 12], ticksOnly: [11], cross: 146 };
const charts = {
  leftEquity: { ...L, y: [10008.3, 10108.6], ticks: steps(10020, 10100, 10), bold: [10050, 10100], tags: [[10076.3, '10,076', 'cb']],
    curve: [[-241, 0], ...gain, ...later, [224.2, 39.3], [311.8, 39.3]].map(p => [p[0], p[1] + 10037.2]), colors: ['#6499f8', '#f8a532'], width: 3, fill: 'rgba(100,150,255,.34)', flat: 5, link: { y: 10081.2, to: 10081.2, c: '#5f8fd0' } },
  leftVars: { ...L, y: [-.2333, .5878], ticks: steps(-.2, .55, .05), bold: [.5], heavy: [0, .5], tags: [[0, '0', '']],
    curve: [[-241, 0], ...gain, ...later, [224.2, 47.7], [224.3, 0], [310.5, 0]].map(p => [p[0], p[1] * .00821]), colors: ['#000', '#000'], thin: true, flat: 3, link: { y: .3615, to: .3615, c: '#000', dot: true } },
  leftPos: { ...L, y: [-.05, 1.07], ticks: [1], bold: [], tags: [[0, '0', 'cb']], block: [0, 224.3, '#6199ff'] },
  leftPrice: { ...L, y: [12110.3, 12219.9], ticks: steps(12115, 12215, 5), bold: [12200, 12150], tags: [[12164.4, '12,164.4', 'yellow']], bars: true, level: 12164.4, stops: true,
    link: { y: 12188.1, to: 12188.1, c: '#7b8fa0', dot: true }, link2: { y: 12145.2, to: 12145.2, c: '#0d0da8', dot: true }, arrow: [0, 12132.8, '#6fa5f8', '#2f63b8'], cross2: [224.5, 12194.6, '#fba52c', '#c97a10'] },
  midEquity: { ...M, y: [-27.5, 47.4], ticks: steps(-20, 30, 10), bold: [0], tags: [[40.4, '40.400', 'cg']],
    curve: [[-117, 0], ...gain, [147.7, 40.3], [245, 40.3]], colors: ['#35ad3c', '#e03636'], width: 4, fill: '#aaabdb', flat: 6, link: { y: 40.1, to: 43.9, c: '#3faf46', dot: true } },
  midPos: { ...M, y: [-.06, 1.06], ticks: [1], bold: [], tags: [[0, '0', 'cg']], stripes: [0, 146, '#62cc66'], link: { y: .04, to: 1, c: '#5ec763', dot: true } },
  midPrice: { ...M, y: [12114.9, 12218.25], ticks: steps(12120, 12210, 10), bold: [12200, 12150], tags: [[12164.4, '12,164.4', 'yellow']], bars: true, level: 12164.4,
    link: { y: 12188.1, to: 12188.1, c: '#7b8fa0', dot: true }, arrow: [0, 12132.7, '#2fb53a', '#14701c'], cross2: [147.2, 12191.3, '#ee3a3a', '#a51818'] }
};

function draw(panel) {
  const c = charts[panel.dataset.chart], plot = panel.querySelector('.plot'), axis = panel.querySelector('.axis');
  const W = plot.clientWidth, H = plot.clientHeight;
  const X = t => +((t - c.t[0]) / (c.t[1] - c.t[0]) * W).toFixed(1), Y = v => +((c.y[1] - v) / (c.y[1] - c.y[0]) * H).toFixed(1);
  const line = (x1, y1, x2, y2, s, w) => `<path d="M${x1} ${y1}L${x2} ${y2}" stroke="${s}" stroke-width="${w}"/>`;
  const stick = (x, y1, y2, s) => `<rect x="${Math.round(x) - 1}" y="${y1}" width="2" height="${Math.max(2, y2 - y1).toFixed(1)}" fill="${s}"/>`;
  const xc = X(c.cross);
  let s = '';
  if (c.grid) {
    for (let h = 5; h <= 16; h++) s += line(X((h - 9) * 60), 0, X((h - 9) * 60), H, 'rgba(105,115,155,.2)', 2);
    c.ticks.forEach(v => { s += line(0, Y(v), W, Y(v), (c.heavy || c.bold).includes(v) ? 'rgba(105,120,160,.45)' : 'rgba(105,115,155,.22)', 3); });
  }
  if (c.block) s += `<rect x="${X(c.block[0])}" y="${Y(1)}" width="${X(c.block[1]) - X(c.block[0])}" height="${Y(0) - Y(1)}" fill="${c.block[2]}"/>`;
  if (c.stripes) for (let m = c.stripes[0]; m <= c.stripes[1]; m++) s += stick(X(m), Y(1), Y(0), c.stripes[2]);
  if (c.block || c.stripes) s += line(0, Y(0), W, Y(0), '#3636b4', 3);
  if (c.curve) {
    const p = c.curve.map(q => [X(q[0]), Y(q[1])]);
    if (c.fill) s += `<path d="M${p[0][0]} ${H}L${p.join('L')}L${p[p.length - 1][0]} ${H}z" fill="${c.fill}"/>`;
    if (c.thin) s += `<path d="M${p.join('L')}" fill="none" stroke="#000" stroke-width="2"/>`;
    p.slice(1).forEach((q, i) => {
      const a = p[i], long = q[0] - a[0] > 60;
      if (!c.thin || long) s += `<path d="M${a}L${q}" stroke-linecap="${long ? 'butt' : 'round'}" stroke="${c.colors[q[1] > a[1] || (long && i > 5) ? 1 : 0]}" stroke-width="${long ? c.flat : c.width}"/>`;
    });
  }
  if (c.bars) bars.forEach(b => { s += stick(X(b.t), Y(b.hi), Y(b.lo), b.d === 'up' ? '#5dcc60' : '#d9696e'); });
  if (c.stops) {
    const path = a => a.map(q => [X(q[0]), Y(q[1])]).join('L'), end = 12110;
    s += `<path d="M${path([[145.7, end], [145.7, 12145.2], [147.8, 12145.2], [149, 12154.1], [195.8, 12154.1], [196.5, 12163.9], [198.3, 12164.2], [200.2, 12167.5], [223, 12167.5], [223.3, end]])}M${path([[196.3, end], [196.8, 12182.7], [199, 12182.8], [200.2, 12183.5], [223, 12183.5], [223.3, end]])}" fill="none" stroke="#1010e0" stroke-width="2"/>`;
  }
  if (c.level) s += line(0, Y(c.level), W, Y(c.level), 'rgba(226,80,90,.55)', 3);
  s += line(xc, 0, xc, H, 'rgba(235,70,80,.6)', 2);
  [c.link, c.link2].forEach(k => {
    if (!k) return;
    const a = xc - 160, y1 = Y(k.y), y2 = Y(k.to);
    s += `<path d="M${a} ${y1}C${a + 80} ${y1} ${xc - 80} ${y2} ${xc} ${y2}" fill="none" stroke="${k.c}" stroke-width="3"/>`;
    if (k.dot) s += `<circle cx="${xc}" cy="${y2}" r="6" fill="#f6f9ff" stroke="${k.c === '#7b8fa0' ? '#222' : k.c}" stroke-width="1.5"/>`;
  });
  if (c.arrow) { const [t, v, f, e] = c.arrow; s += `<path d="M${X(t)} ${Y(v)}l10 11h-6v13h-8v-13h-6z" fill="${f}" stroke="${e}"/>`; }
  if (c.cross2) { const [t, v, f, e] = c.cross2; s += `<path d="M${X(t) - 6} ${Y(v) - 10}l6 5 6-5 5 5-5 6 5 5-5 5-6-5-6 5-5-5 5-5-5-6z" stroke-linejoin="round" fill="${f}" stroke="${e}" stroke-width="1.5"/>`; }
  const old = plot.querySelector('.canvas');
  if (old) old.remove();
  plot.insertAdjacentHTML('afterbegin', `<svg class="canvas" viewBox="0 0 ${W} ${H}">${s}</svg>`);
  plot.style.setProperty('--cross', xc + 'px');
  plot.querySelectorAll('[data-y]').forEach(e => { e.style.top = Y(+e.dataset.y) + 'px'; });
  plot.querySelectorAll('[data-x]').forEach(e => { e.style.left = X(+e.dataset.x) + 'px'; });
  const place = v => Math.min(H - 15, Math.max(11, Y(v))) + 1;
  axis.innerHTML = c.ticks.filter(v => !c.tags.some(g => Math.abs(Y(v) - Y(g[0])) < 8)).map(v => `<span class="${c.bold.includes(v) ? 'bold' : ''}" style="top:${place(v)}px">${commas(v)}</span>`).join('')
    + c.tags.map(g => `<span class="tag ${g[2]}" style="top:${place(g[0])}px">${g[1]}</span>`).join('');
}
function drawTime(el) {
  const c = charts[el.dataset.chart], pct = t => (t - c.t[0]) / (c.t[1] - c.t[0]) * 100;
  const mark = (h, text) => `<span style="left:${pct((h - 9) * 60)}%">${text}</span>`;
  el.querySelector('.hours').innerHTML = c.hours.map(h => mark(h, String(h).padStart(2, '0') + ':00')).join('') + c.ticksOnly.map(h => mark(h, '')).join('')
    + `<span class="now" style="left:${pct(c.cross)}%">Wed 22-May-2019 11:26</span>`;
}
function render() {
  document.querySelectorAll('.panel').forEach(draw);
  document.querySelectorAll('.time').forEach(drawTime);
}
render();
addEventListener('resize', render);
```
